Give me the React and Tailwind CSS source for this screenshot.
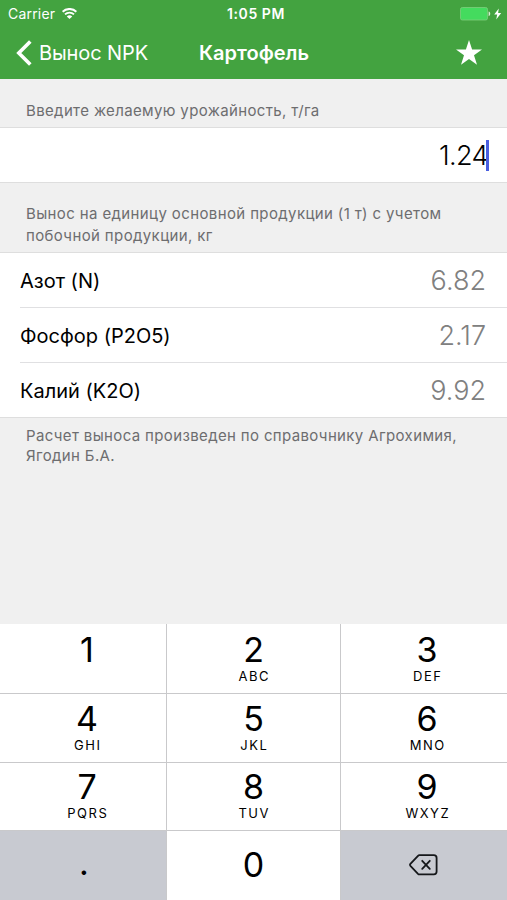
import { Fragment } from 'react'

const nutrients = [
  { name: 'Азот (N)', value: '6.82' },
  { name: 'Фосфор (P2O5)', value: '2.17' },
  { name: 'Калий (K2O)', value: '9.92' },
]

const keys = [
  { digit: '1', letters: '', offset: 'pl-[8px] pt-[9px]' },
  { digit: '2', letters: 'ABC', offset: 'pt-[9px]' },
  { digit: '3', letters: 'DEF', offset: 'pl-[6px] pt-[9px]' },
  { digit: '4', letters: 'GHI', offset: 'pl-[8px] pt-[8px]' },
  { digit: '5', letters: 'JKL', offset: 'pt-[8px]' },
  { digit: '6', letters: 'MNO', offset: 'pl-[6px] pt-[8px]' },
  { digit: '7', letters: 'PQRS', offset: 'pl-[8px] pt-[7px]' },
  { digit: '8', letters: 'TUV', offset: 'pt-[7px]' },
  { digit: '9', letters: 'WXYZ', offset: 'pl-[6px] pt-[7px]' },
]

const WifiIcon = () => (
  <svg className="w-[15px] h-[11px]" viewBox="0 0 15 11" fill="none" stroke="white" strokeWidth="1.9">
    <path d="M0.6 3.7C4.4 0 10.6 0 14.4 3.7" />
    <path d="M3 6.4C5.5 4 9.5 4 12 6.4" />
    <path d="M7.5 11L4.8 8.4C6.2 7 8.8 7 10.2 8.4Z" fill="white" stroke="none" />
  </svg>
)

const BatteryIcon = () => (
  <svg className="w-[42px] h-[14px]" viewBox="0 0 42 14">
    <rect x="0.5" y="0.5" width="27" height="12.5" rx="1.8" fill="#44db5e" stroke="#7dcf7c" strokeWidth="0.8" />
    <path d="M28.6 4.6C30.8 4.9 30.8 8.9 28.6 9.2Z" fill="#d8f0d6" />
    <path d="M38.8 1.4L34.2 7.6H37.2L36.2 12.4L41.2 5.9H38.1Z" fill="white" />
  </svg>
)

const BackspaceIcon = () => (
  <svg className="w-[29px] h-[22px]" viewBox="0 0 29 22" fill="none" stroke="#15171a" strokeWidth="1.8" strokeLinejoin="round" strokeLinecap="round">
    <path d="M10.4 1.2H24.8Q27.6 1.2 27.6 4V17.6Q27.6 20.4 24.8 20.4H10.4Q9.6 20.4 9 19.8L1.4 11.8Q0.6 10.8 1.4 9.8L9 1.8Q9.6 1.2 10.4 1.2Z" />
    <path d="M13.2 6.8L20.8 14.8M20.8 6.8L13.2 14.8" />
  </svg>
)

const Key = ({ digit, letters, offset }) => (
  <button className={`flex flex-col items-center bg-white text-black ${offset}`}>
    <span className="text-[34px] leading-[34px]">{digit}</span>
    <span className="mt-px text-[13px] leading-[16px] tracking-[1.5px] pl-[1.5px]">{letters}</span>
  </button>
)

const App = () => {
  return (
    <div className="w-full h-[900px] flex flex-col overflow-hidden bg-[#f0f0f0] font-['Inter',sans-serif]">
      {/* Status bar and navigation */}
      <header className="h-[79px] shrink-0 bg-[#43a340] text-white">
        <div className="h-[27px] grid grid-cols-3 items-center px-2">
          <div className="flex items-center gap-[7px]">
            <span className="text-[14px] leading-[20px] tracking-[0.2px]">Carrier</span>
            <WifiIcon />
          </div>
          <span className="text-center text-[14px] leading-[20px] font-semibold tracking-[0.55px] pl-[5px]">1:05 PM</span>
          <div className="flex justify-end -mr-[3px]">
            <BatteryIcon />
          </div>
        </div>
        <div className="h-[52px] flex items-center pl-4 pr-[25px]">
          <button className="flex items-center gap-[7px] w-[183px]">
            <svg className="w-4 h-[26px]" viewBox="0 0 16 26" fill="none" stroke="white" strokeWidth="3.6">
              <path d="M14.3 1.5L2.8 13L14.3 24.5" />
            </svg>
            <span className="text-[20px] leading-[26px] tracking-[-0.1px]">Вынос NPK</span>
          </button>
          <h1 className="text-[20px] leading-[26px] font-semibold">Картофель</h1>
          <svg className="ml-auto mb-[2px] w-[26px] h-[25px]" viewBox="0 0 26 25" fill="white">
            <path d="M13 0L16.1 9.4H26L18 15.2L21 24.7L13 18.9L5 24.7L8 15.2L0 9.4H9.9Z" />
          </svg>
        </div>
      </header>

      {/* Yield input */}
      <p className="h-[48px] shrink-0 pt-[21px] pl-[26px] text-[15px] leading-[22px] tracking-[0.36px] text-[#6d6d6f]">
        Введите желаемую урожайность, т/га
      </p>
      <div className="h-[56px] shrink-0 flex items-center justify-end pr-[18px] bg-white border-y border-[#dedede]">
        <span className="-mr-[2px] pt-[2px] text-[27px] leading-[32px] tracking-[-0.6px] font-light text-black">1.24</span>
        <span className="w-[3px] h-[31px] bg-[#4a5fe0]"></span>
      </div>

      {/* Nutrient removal */}
      <p className="h-[69px] shrink-0 pt-[20px] pl-[26px] text-[15px] leading-[22px] tracking-[0.38px] text-[#6d6d6f]">
        Вынос на единицу основной продукции (1 т) с учетом
        <br />
        побочной продукции, кг
      </p>
      <div className="h-[166px] shrink-0 bg-white border-y border-[#dedede]">
        {nutrients.map((item, index) => (
          <Fragment key={item.name}>
            {index > 0 && <div className="ml-5 h-px bg-[#e0e0e2]"></div>}
            <div className="h-[54px] flex items-center justify-between pt-[2px] pl-5 pr-[21px]">
              <span className="text-[20px] leading-[26px] text-black">{item.name}</span>
              <span className="text-[27px] leading-[32px] font-light text-[#808080]">{item.value}</span>
            </div>
          </Fragment>
        ))}
      </div>
      <p className="flex-1 pt-[8px] pl-[26px] text-[15px] leading-[20px] tracking-[0.36px] text-[#6d6d6f]">
        Расчет выноса произведен по справочнику Агрохимия,
        <br />
        Ягодин Б.А.
      </p>

      {/* Keypad */}
      <div className="h-[276px] shrink-0 grid grid-cols-[166px_173px_1fr] grid-rows-[69px_68px_67px_1fr] gap-px bg-[#c9c9cb]">
        {keys.map((key) => (
          <Key key={key.digit} digit={key.digit} letters={key.letters} offset={key.offset} />
        ))}
        <button className="flex justify-center items-start pt-[15px] pl-[2px] bg-[#c8cad1] text-[34px] leading-[34px] text-black">.</button>
        <button className="flex justify-center items-start pt-[17px] bg-white text-[34px] leading-[34px] text-black">0</button>
        <button className="flex items-center justify-center pb-px pr-px bg-[#c8cad1]">
          <BackspaceIcon />
        </button>
      </div>
    </div>
  )
}

export default App
